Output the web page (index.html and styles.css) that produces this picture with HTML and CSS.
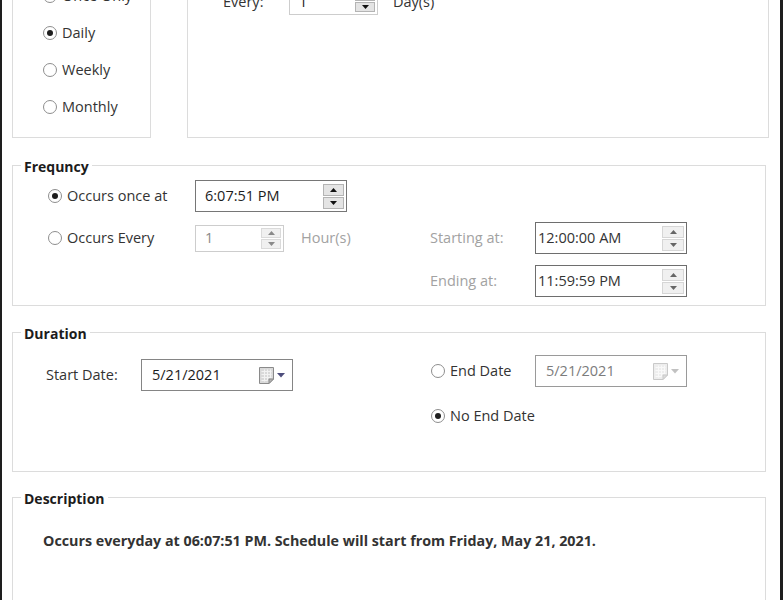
FILE: index.html
```html
<!DOCTYPE html>
<html lang="en">
<head>
<meta charset="utf-8">
<title>Job Schedule</title>
<link rel="stylesheet" href="styles.css">
</head>
<body>
<div class="window">
  <div class="top">
    <div class="box type-box">
      <label class="radio"><span class="dot"></span><span>Once Only</span></label>
      <label class="radio checked"><span class="dot"></span><span>Daily</span></label>
      <label class="radio"><span class="dot"></span><span>Weekly</span></label>
      <label class="radio"><span class="dot"></span><span>Monthly</span></label>
    </div>
    <div class="box every-box">
      <div class="every-row">
        <span class="every-label">Every:</span>
        <div class="field small enabled">
          <span class="val">1</span>
          <span class="spin">
            <span class="btn"><svg width="7" height="4" viewBox="0 0 7 4"><path d="M0 4L3.5 0L7 4Z"/></svg></span>
            <span class="btn"><svg width="7" height="4" viewBox="0 0 7 4"><path d="M0 0L3.5 4L7 0Z"/></svg></span>
          </span>
        </div>
        <span class="unit">Day(s)</span>
      </div>
    </div>
  </div>

  <fieldset class="group freq">
    <legend>Frequncy</legend>
    <div class="freq-grid">
      <label class="radio checked"><span class="dot"></span><span>Occurs once at</span></label>
      <div class="field time span-rest">
        <span class="val">6:07:51 PM</span>
        <span class="spin">
          <span class="btn"><svg width="7" height="4" viewBox="0 0 7 4"><path d="M0 4L3.5 0L7 4Z"/></svg></span>
          <span class="btn"><svg width="7" height="4" viewBox="0 0 7 4"><path d="M0 0L3.5 4L7 0Z"/></svg></span>
        </span>
      </div>

      <label class="radio"><span class="dot"></span><span>Occurs Every</span></label>
      <div class="field small disabled">
        <span class="val">1</span>
        <span class="spin">
          <span class="btn"><svg width="7" height="4" viewBox="0 0 7 4"><path d="M0 4L3.5 0L7 4Z"/></svg></span>
          <span class="btn"><svg width="7" height="4" viewBox="0 0 7 4"><path d="M0 0L3.5 4L7 0Z"/></svg></span>
        </span>
      </div>
      <span class="muted">Hour(s)</span>
      <span class="muted">Starting at:</span>
      <div class="field range">
        <span class="val">12:00:00 AM</span>
        <span class="spin">
          <span class="btn"><svg width="7" height="4" viewBox="0 0 7 4"><path d="M0 4L3.5 0L7 4Z"/></svg></span>
          <span class="btn"><svg width="7" height="4" viewBox="0 0 7 4"><path d="M0 0L3.5 4L7 0Z"/></svg></span>
        </span>
      </div>

      <span class="muted col-d">Ending at:</span>
      <div class="field range">
        <span class="val">11:59:59 PM</span>
        <span class="spin">
          <span class="btn"><svg width="7" height="4" viewBox="0 0 7 4"><path d="M0 4L3.5 0L7 4Z"/></svg></span>
          <span class="btn"><svg width="7" height="4" viewBox="0 0 7 4"><path d="M0 0L3.5 4L7 0Z"/></svg></span>
        </span>
      </div>
    </div>
  </fieldset>

  <fieldset class="group dur">
    <legend>Duration</legend>
    <div class="dur-body">
      <div class="dur-left">
        <span class="dur-label">Start Date:</span>
        <div class="field date">
          <span class="val">5/21/2021</span>
          <span class="cal">
            <svg width="15" height="17" viewBox="0 0 15 17"><path d="M0.5 0.5H14.5V12L10 16.5H0.5Z" fill="#d9d9d9" stroke="#8a8a8a"/><path d="M2.5 4.5H12.5M2.5 7.5H12.5M2.5 10.5H12.5M2.5 13.5H8.5M5.5 2.5V14.5M8.5 2.5V13.5M11.5 2.5V11" stroke="#f2f2f2"/><path d="M10 16.5V12H14.5Z" fill="#b5b5b5" stroke="#8a8a8a"/></svg>
            <svg class="drop" width="8" height="5" viewBox="0 0 8 5"><path d="M0 0H8L4 4.5Z"/></svg>
          </span>
        </div>
      </div>
      <div class="dur-right">
        <div class="end-row">
          <label class="radio end-radio"><span class="dot"></span><span>End Date</span></label>
          <div class="field date disabled-date">
            <span class="val">5/21/2021</span>
            <span class="cal">
              <svg width="15" height="17" viewBox="0 0 15 17"><path d="M0.5 0.5H14.5V12L10 16.5H0.5Z" fill="#d9d9d9" stroke="#8a8a8a"/><path d="M2.5 4.5H12.5M2.5 7.5H12.5M2.5 10.5H12.5M2.5 13.5H8.5M5.5 2.5V14.5M8.5 2.5V13.5M11.5 2.5V11" stroke="#f2f2f2"/><path d="M10 16.5V12H14.5Z" fill="#b5b5b5" stroke="#8a8a8a"/></svg>
              <svg class="drop" width="8" height="5" viewBox="0 0 8 5"><path d="M0 0H8L4 4.5Z"/></svg>
            </span>
          </div>
        </div>
        <label class="radio checked"><span class="dot"></span><span>No End Date</span></label>
      </div>
    </div>
  </fieldset>

  <fieldset class="group desc">
    <legend>Description</legend>
    <div class="desc-body">
      <p class="desc-text">Occurs everyday at 06:07:51 PM. Schedule will start from Friday, May 21, 2021.</p>
    </div>
  </fieldset>
</div>
</body>
</html>
```

FILE: styles.css
```css
html, body {
  margin: 0;
  padding: 0;
  background: #ffffff;
}

body {
  font-family: "Open Sans", "Segoe UI", sans-serif;
  font-size: 14.5px;
  line-height: 20px;
  color: #333333;
  height: 600px;
  overflow: hidden;
}

.window {
  box-sizing: border-box;
  width: 783px;
  height: 600px;
  border-left: 2px solid #1e1e1e;
  border-right: 3px solid #1e1e1e;
  padding: 0 14px 0 10px;
  overflow: hidden;
}

/* ---------- top (clipped) section ---------- */
.top {
  display: flex;
  gap: 36px;
  margin-top: -30px;
  margin-right: -3px;
}

.box {
  border: 1px solid #dcdcdc;
  box-sizing: border-box;
}

.type-box {
  width: 139px;
  flex: none;
  display: flex;
  flex-direction: column;
  gap: 17px;
  padding: 15px 0 20px 30px;
}

.every-box {
  flex: 1;
  padding: 17px 0 0 35px;
}

.every-row {
  display: flex;
  align-items: center;
}

.every-label {
  width: 66px;
  flex: none;
}

.unit {
  margin-left: 15px;
}

/* ---------- radio ---------- */
.radio {
  display: flex;
  align-items: center;
  gap: 5px;
  height: 20px;
  white-space: nowrap;
}

.dot {
  flex: none;
  box-sizing: border-box;
  width: 14px;
  height: 14px;
  border: 1px solid #8e8e8e;
  border-radius: 50%;
  background: #ffffff;
  display: grid;
  place-items: center;
}

.checked .dot::after {
  content: "";
  width: 6px;
  height: 6px;
  border-radius: 50%;
  background: #1e1e1e;
}

/* ---------- group boxes ---------- */
.group {
  margin: 0;
  padding: 0;
  border: 1px solid #dcdcdc;
  min-width: 0;
}

.group legend {
  margin-left: 8px;
  padding: 3px 3px 0;
  line-height: 20px;
  font-size: 14px;
  font-weight: 700;
  color: #1c1c1c;
}

.freq {
  margin-top: 16px;
}

.dur {
  margin-top: 15px;
}

.desc {
  margin-top: 14px;
}

/* ---------- fields ---------- */
.field {
  box-sizing: border-box;
  display: flex;
  align-items: center;
  width: 152px;
  height: 32px;
  border: 1px solid #767676;
  background: #ffffff;
  color: #1c1c1c;
  padding-left: 9px;
}

.spin {
  margin-left: auto;
  margin-right: 2px;
  display: flex;
  flex-direction: column;
  gap: 1px;
}

.btn {
  box-sizing: border-box;
  width: 21px;
  height: 12px;
  background: #e4e4e4;
  border: 1px solid #b4b4b4;
  display: grid;
  place-items: center;
  color: #111111;
}

.btn svg {
  display: block;
  fill: currentColor;
}

.field.small {
  width: 89px;
  height: 27px;
  border-color: #cdcdcd;
}

.field.small .btn {
  width: 20px;
  height: 10px;
}

.field.small.enabled {
  color: #222222;
}

.field.small.disabled {
  color: #8a8a8a;
}

.field.small.disabled .btn {
  background: #f0f0f0;
  border-color: #dadada;
  color: #8a8a8a;
}

.field.range {
  padding-left: 2px;
  border-color: #6e6e6e;
  color: #333333;
}

.field.range .btn {
  width: 22px;
  background: #f0f0f0;
  border-color: #d6d6d6;
  color: #666666;
}

.muted {
  color: #a2a2a2;
  white-space: nowrap;
}

/* ---------- frequency grid ---------- */
.freq-grid {
  display: grid;
  grid-template-columns: 147px 106px 129px 105px 152px;
  grid-template-rows: 32px 32px 33px;
  row-gap: 10px;
  align-items: end;
  padding: 3px 0 8px 35px;
}

.freq-grid > .radio,
.freq-grid > .muted,
.freq-grid > .small {
  align-self: center;
}

.freq-grid > .col-d {
  align-self: end;
  margin-bottom: 6px;
}

.span-rest {
  grid-column: 2 / span 4;
}

.col-d {
  grid-column: 4;
}

/* ---------- duration ---------- */
.dur-body {
  display: flex;
  height: 127px;
}

.dur-left {
  box-sizing: border-box;
  width: 418px;
  flex: none;
  display: flex;
  align-items: center;
  align-self: flex-start;
  padding: 15px 0 0 33px;
}

.dur-label {
  width: 95px;
  flex: none;
}

.field.date {
  padding-left: 10px;
  border-color: #858585;
}

.cal {
  margin-left: auto;
  margin-right: 7px;
  display: flex;
  align-items: center;
  gap: 3px;
}

.cal svg {
  display: block;
}

.cal .drop {
  fill: #4d4d7c;
}

.dur-right {
  display: flex;
  flex-direction: column;
  gap: 19px;
  padding-top: 11px;
}

.end-row {
  display: flex;
  align-items: center;
}

.end-radio {
  width: 104px;
}

.field.disabled-date {
  color: #7c7c7c;
  border-color: #9a9a9a;
}

.disabled-date .cal {
  opacity: 0.45;
}

.disabled-date .cal .drop {
  fill: #777777;
}

/* ---------- description ---------- */
.desc-body {
  height: 200px;
  padding: 22px 0 0 30px;
}

.desc-text {
  margin: 0;
  font-size: 14.3px;
  font-weight: 700;
  color: #333333;
  line-height: 20px;
  white-space: nowrap;
}
```
